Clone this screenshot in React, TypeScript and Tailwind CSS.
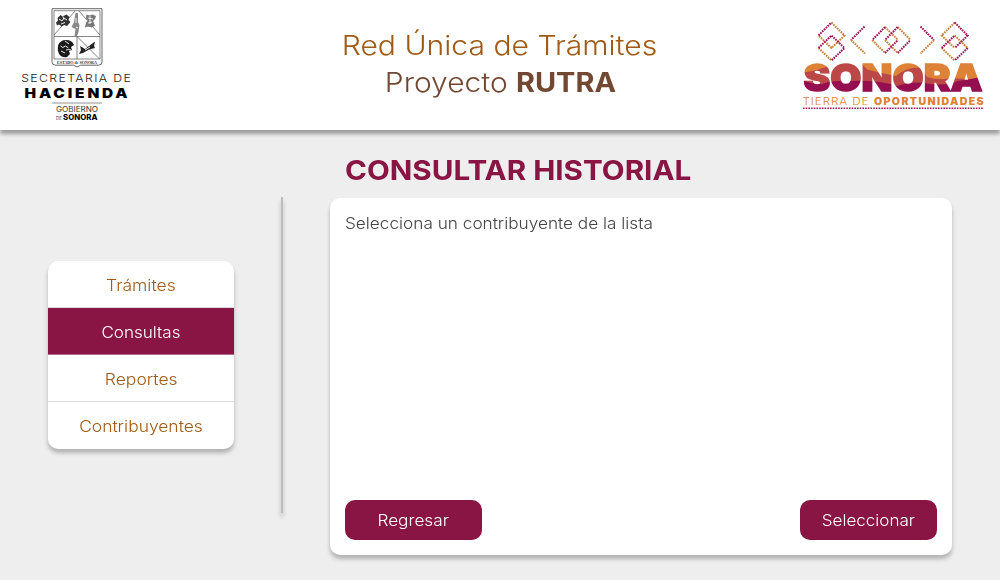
import React from "react";

const M = "#a0145c";
const O = "#dd8236";
const ORO = "#c87f3c";

function Dots({ d, c }: { d: string; c: string }) {
  return <path d={d} stroke={c} strokeWidth="2" strokeDasharray="1.700 0.900" fill="none" />;
}

function Hacienda() {
  return (
    <svg width="130" height="130" viewBox="10 0 130 130" fontFamily="Inter, sans-serif" className="block">
      <g fill="none" stroke="#555" strokeWidth="0.9">
        <path d="M52 8.700h50v53q0 3.500-3.500 3.500H80.500L77 67l-3.500-1.800H55.500q-3.500 0-3.500-3.500z" />
        <path d="M54 10.700h46v48.300H54zM54 36.500h46M77 36.500V59M75 11L54 35M79 11l21 24M77 36.500L99.500 59" strokeWidth="0.7" />
      </g>
      <g fill="#333">
        <path d="M57.500 18l3-3 2 1.500 4-2 3 2.500-1 3 2 2-3.500 4-3-1-2 1.500-3-2-2 1-1-3 2-2z" />
        <path d="M86.500 14.500l3 1 3-1 3.500 1.500-1 3-2 2 2 4.500-3 2-4-1-3 1 1-5 2-2-2-2z" fill="#777" />
        <path d="M75.500 13h2.500v9l1.500 3-1 7-1.500 4h-2.500l1-7-4-2 2.500-5z" fill="#888" />
        <path d="M58 45.500q2-5.500 8-5.500 6 0 8 5l-3 2 1 3-3 1 1 3-3 3q-5 1-8-3-2-4-1-8.500z" fill="#1a1a1a" />
        <path d="M80 46l5 3 6-4.500 4-3-1 4.500 1 2-6 1.500-6 3.500-4 1 2-4z" fill="#222" />
      </g>
      <g stroke="#fff" strokeWidth="0.9" fill="none">
        <path d="M59 19l3 2 2-3 3 2M61 24l4-1.500M63 16.500l1 3M60.500 46q2 3 5 0l3 2M61 51l4 2M65 41l4 3M66 50q3-1 5 0M88 18l5 1M88 23l4-1M90 16v8M76 18v5M76 27l2 1M85 50l5-3" />
      </g>
      <text x="57" y="64" fontFamily="Liberation Serif, serif" fontWeight="700" fontSize="4.600" textLength="40" lengthAdjust="spacingAndGlyphs" fill="#333">ESTADO de SONORA</text>
      <text x="21.200" y="82" fontSize="10.800" fontWeight="300" letterSpacing="1.200" textLength="111" lengthAdjust="spacingAndGlyphs" fill="#222">SECRETARIA DE</text>
      <text x="24.500" y="98" fontSize="13.300" fontWeight="900" letterSpacing="2.500" textLength="106" lengthAdjust="spacingAndGlyphs" fill="#000">HACIENDA</text>
      <path d="M52 103h50" stroke="#777" strokeWidth="0.8" />
      <text x="56" y="112" fontSize="7.400" textLength="42" lengthAdjust="spacingAndGlyphs" fill="#333">GOBIERNO</text>
      <text x="56" y="120" fontSize="4.500" textLength="6" lengthAdjust="spacingAndGlyphs" fill="#333">DE</text>
      <text x="63" y="120" fontSize="7.200" fontWeight="800" textLength="34.500" lengthAdjust="spacingAndGlyphs" fill="#000">SONORA</text>
    </svg>
  );
}

function Sonora() {
  return (
    <svg width="190" height="110" viewBox="800 10 190 110" fontFamily="Inter, sans-serif" className="block">
      <defs>
        <mask id="word" maskUnits="userSpaceOnUse" x="800" y="55" width="190" height="45">
          <text x="803.500" y="90.600" fontSize="37.500" fontWeight="900" textLength="179" lengthAdjust="spacingAndGlyphs" fill="#fff" stroke="#fff" strokeWidth="1.400">SONORA</text>
        </mask>
      </defs>
      <Dots c={ORO} d="M831.500 22.500l13 13l-13 12.500l-13-12.500M818.500 48l13 12.500" />
      <Dots c={M} d="M818.500 35.500l13-13M818.500 48l13-12.500l13 12.500l-13 12.500" />
      <Dots c={ORO} d="M954.700 22.500l-13 13l13 12.500M954.700 35.500l13 12.500M941.700 48l13 12.500" />
      <Dots c={M} d="M954.700 22.500l13 13l-13 12.500M941.700 48l13-12.500M967.700 48l-13 12.500" />
      <Dots c={M} d="M864.500 26.500L851 40" />
      <Dots c={ORO} d="M851 40L865 53.500" />
      <Dots c={ORO} d="M885 27L898 40M872.300 40L885 53M897.700 27L910.500 40M885 40L897.700 53" />
      <Dots c={M} d="M885 27L872.300 40M885 53L898 40M897.700 27L885 40M897.700 53L910.500 40" />
      <Dots c={M} d="M920.500 26.500L934 40" />
      <Dots c={ORO} d="M934 40L920.500 53.500" />
      <g mask="url(#word)">
        <path d="M800 55h190v45h-190z" fill={O} />
        <path d="M800 73Q817 71 828 66Q846 61 862 64L867 69.500Q880 73 896 76Q906 66.500 922 67.500L927 77Q940 81 949 78L985 80V100H800z" fill="#bc4747" />
        <path d="M800 79.500Q812 84 822 84Q834 80 850 81Q880 80 897 86Q915 80 930 84Q948 86 958 81Q968 80 985 76V100H800z" fill="#940e50" />
      </g>
      <text x="802.500" y="105" fontSize="10" fontWeight="300" letterSpacing="0.800" textLength="67" lengthAdjust="spacingAndGlyphs" fill={O}>TIERRA DE</text>
      <text x="874" y="105" fontSize="9.800" fontWeight="900" letterSpacing="1.300" textLength="111" lengthAdjust="spacingAndGlyphs" fill={O}>OPORTUNIDADES</text>
      <path d="M803 108.300h181" stroke={M} strokeWidth="1.500" strokeDasharray="1.600 1.100" />
    </svg>
  );
}

const items = [
  { label: "Trámites", stretch: "scale-x-[1.13]" },
  { label: "Consultas", stretch: "scale-x-[1.1]" },
  { label: "Reportes", stretch: "scale-x-[1.13]" },
  { label: "Contribuyentes", stretch: "scale-x-[1.125]" },
];

export default function App() {
  return (
    <div className="flex h-[580px] w-[1000px] flex-col overflow-hidden bg-[#eeeeee] font-['Inter',sans-serif]">
      <header className="z-10 grid h-[130px] shrink-0 grid-cols-[1fr_400px_1fr] bg-white px-[10px] shadow-[0_4px_4px_rgba(0,0,0,0.35)]">
        <Hacienda />
        <h1 className="flex flex-col items-center pt-[27px] text-[27px] leading-[37px] font-light whitespace-nowrap">
          <span className="scale-x-[1.115] text-[#a05a14]">Red Única de Trámites</span>
          <span className="flex gap-[8px] pl-[7px] text-[#724832]">
            <span className="origin-right scale-x-[1.11]">Proyecto</span>
            <b className="origin-left scale-x-[1.07] font-bold">RUTRA</b>
          </span>
        </h1>
        <div className="flex justify-end pt-[10px]">
          <Sonora />
        </div>
      </header>
      <main className="flex grow">
        <nav className="mt-[131px] ml-[48px] h-[188px] w-[186px] rounded-[10px] bg-white shadow-[0_4px_4px_rgba(0,0,0,0.25)]">
          {items.map((item, i) => (
            <a
              key={item.label}
              className={
                "flex h-[47px] items-center justify-center border-[#dddddd] pt-[3px] text-[15.5px] font-[350] " +
                (i < 3 ? "border-b " : "") +
                (i === 1 ? "border-b-[#b46a8c] bg-[#881544] text-white" : "text-[#a05a14]")
              }
            >
              <span className={item.stretch}>{item.label}</span>
            </a>
          ))}
        </nav>
        <div className="mt-[67px] ml-[47px] h-[316px] w-[2px] bg-[#bdbdbd] shadow-[0_4px_4px_rgba(0,0,0,0.25)]" />
        <section className="ml-[47px] flex w-[622px] flex-col">
          <h2 className="flex h-[68px] items-center pt-[14px] pl-[15px] text-[27.5px] font-bold text-[#881544]">
            <span className="origin-left scale-x-[1.077] whitespace-nowrap">CONSULTAR HISTORIAL</span>
          </h2>
          <div className="flex h-[357px] flex-col justify-between rounded-[10px] bg-white p-[15px] shadow-[0_4px_4px_rgba(0,0,0,0.25)]">
            <p className="flex h-[21px] items-center text-[15.5px] font-[350] text-[#444444]">
              <span className="origin-left scale-x-[1.11]">Selecciona un contribuyente de la lista</span>
            </p>
            <div className="flex justify-between text-[15.5px] font-light text-white">
              <button className="h-[40px] w-[137px] rounded-[10px] bg-[#881544] pt-[2px]">
                <span className="inline-block scale-x-[1.11]">Regresar</span>
              </button>
              <button className="h-[40px] w-[137px] rounded-[10px] bg-[#881544] pt-[2px]">
                <span className="inline-block scale-x-[1.1]">Seleccionar</span>
              </button>
            </div>
          </div>
        </section>
      </main>
    </div>
  );
}
